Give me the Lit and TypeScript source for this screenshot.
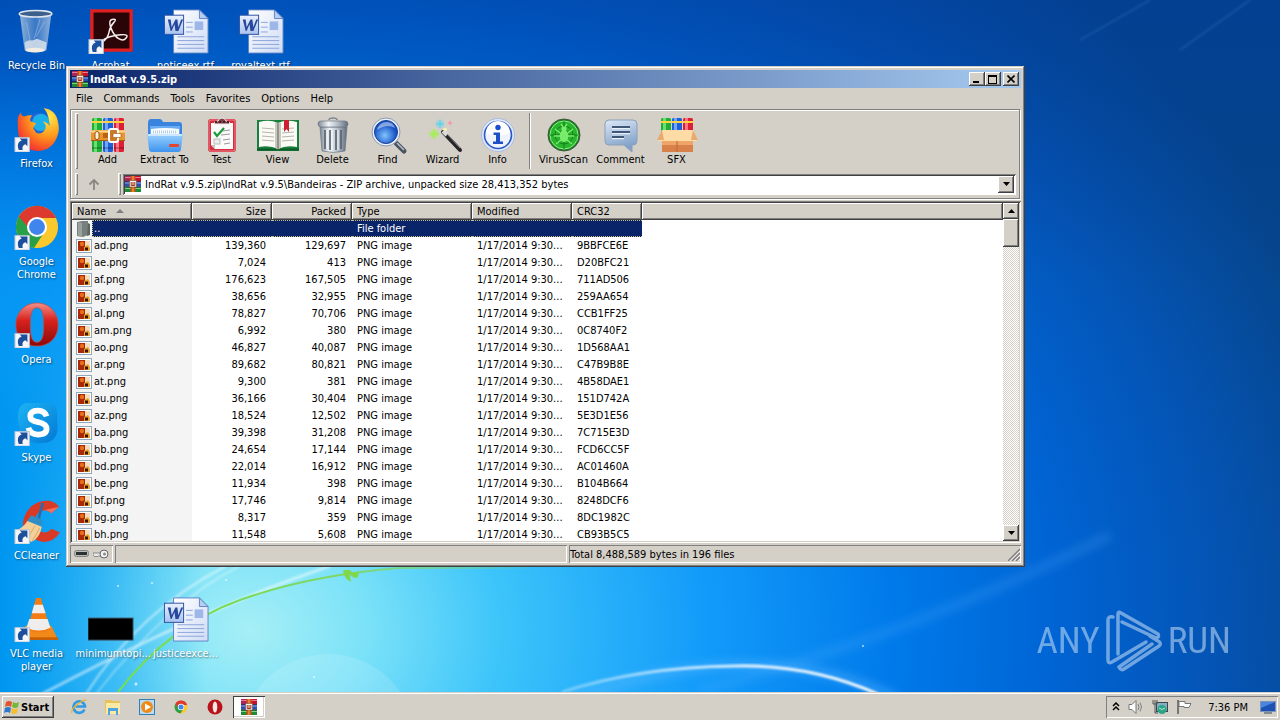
import { LitElement, html, svg, css } from "lit";
import { customElement } from "lit/decorators.js";
import { classMap } from "lit/directives/class-map.js";
import { styleMap } from "lit/directives/style-map.js";

const base = css`
  * { box-sizing: border-box; }
  :host { box-sizing: border-box; font: 11px/13px "DejaVu Sans Condensed", "DejaVu Sans", sans-serif; color: #000; }
  button, select { font: inherit; color: inherit; margin: 0; padding: 0; border: 0; border-radius: 0; background: none; }
  svg { display: block; flex: none; }
  .raised {
    background: #d4d0c8;
    box-shadow: inset -1px -1px #404040, inset 1px 1px #fff, inset -2px -2px #808080;
  }
`;

const rarIcon = html`<svg width="16" height="16" viewBox="0 0 16 16" aria-hidden="true">
  <rect x="0" y="0" width="16" height="5" fill="#b0235a"/><rect x="10" y="0" width="6" height="5" fill="#c8102a"/>
  <rect y="1" width="16" height="1" fill="#e87a9a"/>
  <rect y="5.5" width="16" height="5" fill="#2a50b8"/><rect y="6.5" width="16" height="1" fill="#86a8ee"/>
  <rect y="11" width="16" height="5" fill="#1d8a34"/><rect y="12" width="16" height="1" fill="#7ed086"/>
  <rect y="5" width="16" height=".8" fill="#301030"/><rect y="10.4" width="16" height=".8" fill="#102040"/>
  <rect x="5.5" width="5" height="16" fill="#c8541c"/><rect x="7" width="2" height="16" fill="#e88030"/>
  <rect x="4.500" y="4.500" width="7" height="6.500" fill="#f4f0ec" stroke="#6b3a20" stroke-width=".5"/>
  <path d="M6.200 6v3.500h3.600V6M8 6v3" fill="none" stroke="#a83010" stroke-width="1"/>
</svg>`;

const books = (y: number, h: number) => svg`
  <rect x="2" y="${y}" width="10" height="${h}" rx="1.5" fill="#1fae38"/><rect x="4" y="${y}" width="3" height="${h}" fill="#6ae070"/>
  <rect x="13" y="${y}" width="10" height="${h}" rx="1.5" fill="#1f5fd8"/><rect x="15" y="${y}" width="3" height="${h}" fill="#6ea8fa"/>
  <rect x="24" y="${y}" width="10" height="${h}" rx="1.5" fill="#dc1f34"/><rect x="26" y="${y}" width="3" height="${h}" fill="#ff7482"/>
  <path d="M2 ${y + 4}h10M13 ${y + 4}h10M24 ${y + 4}h10" stroke="#ffd23c" stroke-width="2"/>`;

const tools: Record<string, unknown> = {
  Add: svg`${books(1, 34)}
    <path d="M2 31h10M13 31h10M24 31h10" stroke="#0003" stroke-width="2"/>
    <rect x="1" y="13" width="34" height="11" rx="1" fill="#e8952c"/><path d="M1 14.5h34" stroke="#ffd78a" stroke-width="2"/><path d="M1 23.5h34" stroke="#a85a10"/>
    <rect x="5" y="14.500" width="4" height="8" rx="2" fill="#fff4d8" stroke="#9a5414"/><rect x="13" y="16" width="5" height="5" fill="#b86414"/>
    <rect x="19" y="12" width="9" height="13" rx="2" fill="#c87c2a" stroke="#fff" stroke-width="2"/><rect x="23" y="16.500" width="8" height="4" rx="1" fill="#fff" stroke="#9a5414" stroke-width=".6"/>`,
  "Extract To": svg`<defs><linearGradient id="fo" x2="0" y2="1"><stop stop-color="#9bd0ff"/><stop offset="1" stop-color="#3d94ee"/></linearGradient></defs>
    <path d="M1 6q0-4 3-4h9q2 0 3 3h16q3 0 3 3v10H1z" fill="#3b84de"/><path d="M3 9h30v8H3z" fill="#68adf4"/>
    <path d="M4 12q14-2 28 0v10H4z" fill="#f6fbff"/><path d="M6 15h24" stroke="#b8cde4" stroke-width="3" stroke-dasharray="1 1"/>
    <path d="M0 17h36l-2 15q0 3-3 3H5q-3 0-3-3z" fill="url(#fo)"/><path d="M1 18h34" stroke="#cbe8ff" stroke-width="2"/><rect x="22" y="27" width="10" height="3" rx="1" fill="#e5452c"/>`,
  Test: svg`<rect x="4" y="2" width="28" height="33" rx="3" fill="#d32f3e"/><rect x="5" y="3" width="26" height="31" rx="2" fill="none" stroke="#f08088"/>
    <path d="M7 6h22v26H11l-4-4z" fill="#fbfafa"/><path d="M7 28h4v4" fill="#c9c4c4"/>
    <path d="M10 7q0-3 4-3 1-3 4-3t4 3q4 0 4 3z" fill="#7a4148" stroke="#f3eaea"/><path d="M11 5h14" stroke="#4a1f28" stroke-dasharray="2 2" stroke-width="2"/>
    <path d="M10 15l3 4 7-8" fill="none" stroke="#1d9a3a" stroke-width="2.200"/><path d="M19 14l7-1M17 18l9-1M19 23l7-1M20 27l6-1" stroke="#999"/>
    <rect x="10" y="22" width="6" height="5" fill="#ececec" stroke="#bbb"/>`,
  View: svg`<path d="M-3 3h42v31H-3z" fill="#17803c"/><path d="M-3 32.500h42" stroke="#0c5a26" stroke-width="2"/>
    <path d="M-1 5q11-3 19 1 8-4 19-1v25q-11-2-19 2-8-4-19-2z" fill="#fbfaf4"/><path d="M15 5.500q2 0 3 1.500 1-1.500 3-1.500v25l-3 2-3-2z" fill="#c9c8be"/>
    <path d="M18 6v26" stroke="#565" stroke-width="1"/>
    <path d="M2 11l12 1M2 15l12 1M2 19l12 1M2 23l12 1M22 12l12-1M22 16l12-1M22 20l12-1M22 24l12-1" stroke="#b5b5ac"/><path d="M24 3h5v12l-2.500-3-2.500 3z" fill="#d11f32"/>`,
  Delete: svg`<defs><linearGradient id="tr"><stop stop-color="#7c8796"/><stop offset=".35" stop-color="#f2f5f8"/><stop offset=".7" stop-color="#aab4c0"/><stop offset="1" stop-color="#5f6b7b"/></linearGradient></defs>
    <path d="M14 3q0-2 4-2t4 2" fill="none" stroke="#7d8795" stroke-width="1.500"/>
    <path d="M5 10h27l-2 24q-12 3-23 0z" fill="url(#tr)" stroke="#6a7584" stroke-width=".7"/>
    <path d="M10 13v19M15 13v20M21 13v20M26 13v19" stroke="#5a6675" stroke-width="1.700"/><path d="M12 13v19M17 13v20M23 13v20" stroke="#fff"/>
    <rect x="3" y="4" width="30" height="6" rx="3" fill="url(#tr)" stroke="#6a7584" stroke-width=".7"/>`,
  Find: svg`<defs><radialGradient id="gl" cx=".45" cy=".65"><stop stop-color="#7fc4ff"/><stop offset="1" stop-color="#1550c4"/></radialGradient></defs>
    <path d="M26 26l8 8" stroke="#4a525e" stroke-width="5" stroke-linecap="round"/><path d="M27 26l7 7" stroke="#b7c0cc" stroke-width="1.500"/>
    <circle cx="16" cy="15" r="14" fill="#e9eff6" stroke="#8b9bb0"/><circle cx="16" cy="15" r="11.500" fill="url(#gl)" stroke="#1a3f94"/><path d="M7 13q2-8 10-8 6 0 8 6-8-5-18 2z" fill="#fff7"/>`,
  Wizard: svg`<g fill="#a6ee5a"><circle cx="9" cy="17" r="5" opacity=".35"/><path d="M9 11l1.500 4.500L15 17l-4.500 1.500L9 23l-1.500-4.500L3 17l4.500-1.500z"/></g>
    <g fill="#5cd4ee"><circle cx="15" cy="7" r="4.500" opacity=".35"/><path d="M15 2l1 4 4 1-4 1-1 4-1-4-4-1 4-1z"/></g><path d="M25 3l1 2 2 1-2 1-1 2-1-2-2-1 2-1z" fill="#f49aae"/><circle cx="20" cy="13" r="2" fill="#fff6a8"/>
    <path d="M18 15l17 18" stroke="#26262a" stroke-width="4" stroke-linecap="round"/><path d="M18 14l4 4" stroke="#d9d9de" stroke-width="4"/><path d="M22 17l13 14" stroke="#85858c" stroke-width="1"/>`,
  Info: svg`<circle cx="18" cy="18" r="16.500" fill="#dfe8f8" stroke="#a9bce0"/><circle cx="18" cy="18" r="13.500" fill="#eef3fc" stroke="#2a58c8" stroke-width="1.600"/><path d="M6 16a12 12 0 0 1 24 0q-12 5-24 0z" fill="#fff"/>
    <circle cx="18" cy="10.500" r="2.700" fill="#1c4fc8"/><path d="M13.500 15.500h6.500v9h3V27H13v-2.500h3v-6.500h-2.500z" fill="#1c4fc8"/>`,
  VirusScan: svg`<circle cx="18" cy="18" r="16" fill="#16801e" stroke="#3f5a3a"/><circle cx="18" cy="18" r="14" fill="#28b42c" stroke="#8ff08a" stroke-width="1"/>
    <g stroke="#127518" stroke-width=".8" fill="none"><circle cx="18" cy="18" r="9"/><circle cx="18" cy="18" r="5"/><path d="M4 18h28M18 4v28"/></g>
    <ellipse cx="18" cy="19" rx="4.500" ry="6" fill="#7aec6c"/><circle cx="18" cy="12" r="2.600" fill="#7aec6c"/><path d="M9 12l5 4M27 12l-5 4M8 19h6M28 19h-6M10 27l5-4M26 27l-5-4M15 7l2 3M21 7l-2 3" stroke="#7aec6c" stroke-width="1.400"/>`,
  Comment: svg`<defs><linearGradient id="co" x2=".3" y2="1"><stop stop-color="#dce8f6"/><stop offset="1" stop-color="#7e9fc6"/></linearGradient></defs>
    <path d="M6 3h24q4 0 4 4v17q0 4-4 4h-1v7l-8-7H6q-4 0-4-4V7q0-4 4-4z" fill="url(#co)" stroke="#8aa0bc"/>
    <path d="M9 10.500h18M9 15.500h18M9 20.500h12" stroke="#e8f0fa" stroke-width="3.500"/><path d="M9 10h18M9 15h18M9 20h12" stroke="#3f5878" stroke-width="1.800"/>`,
  SFX: svg`${books(1, 14)}
    <path d="M3 13h31v22H3z" fill="#efa468"/><path d="M3 28h31v7H3z" fill="#d9814a"/><path d="M18 24v11" stroke="#b86a38"/><path d="M3 13h31l4 11H-1z" fill="#ffdca6"/><path d="M3 13l-5 10h7zM34 13l5 10h-7z" fill="#e8aa70"/>`,
};

const toolbar: [string, string][] = [
  ["Add", "wide"], ["Extract To", "wide"], ["Test", "wide"], ["View", ""], ["Delete", ""], ["Find", ""], ["Wizard", ""], ["Info", ""],
  ["VirusScan", "wide split"], ["Comment", "wide"], ["SFX", ""],
];

const files = `ad 139,360 129,697 9BBFCE6E|ae 7,024 413 D20BFC21|af 176,623 167,505 711AD506|ag 38,656 32,955 259AA654|al 78,827 70,706 CCB1FF25|am 6,992 380 0C8740F2|ao 46,827 40,087 1D568AA1|ar 89,682 80,821 C47B9B8E|at 9,300 381 4B58DAE1|au 36,166 30,404 151D742A|az 18,524 12,502 5E3D1E56|ba 39,398 31,208 7C715E3D|bb 24,654 17,144 FCD6CC5F|bd 22,014 16,912 AC01460A|be 11,934 398 B104B664|bf 17,746 9,814 8248DCF6|bg 8,317 359 8DC1982C|bh 11,548 5,608 CB93B5C5`
  .split("|").map((r) => r.split(" "));

const pngIcon = html`<svg width="16" height="16" viewBox="0 0 16 16" aria-hidden="true"><rect x=".5" y="1.500" width="15" height="13" fill="#fff" stroke="#8fa8bc"/>
  <rect x="2" y="3" width="12" height="10" fill="#f7ddc0"/><path d="M2 3h7v6l-1 4H2z" fill="#a82808"/><circle cx="6" cy="6" r="2.200" fill="#e8701c"/><path d="M8 9l4-2 2 3v3H8z" fill="#e8a02c"/><rect x="9" y="9.500" width="3" height="3" fill="#3a1408"/></svg>`;
const folderIcon = html`<svg width="16" height="16" viewBox="0 0 16 16" aria-hidden="true"><path d="M1 1l5-1h6v14l-5 2-6-1z" fill="#77807c"/><path d="M2 1l4 1v14l-4-1z" fill="#9aa19c"/><path d="M12 2l2 1v11l-3 1z" fill="#5d6562"/></svg>`;
const tri = (up: boolean) => html`<svg width="7" height="4" viewBox="0 0 7 4" aria-hidden="true"><path d="${up ? "M0 4h7L3.500 0z" : "M0 0h7L3.500 4z"}"/></svg>`;

@customElement("archive-window")
class ArchiveWindow extends LitElement {
  static styles = [base, css`
    :host {
      display: flex; flex-direction: column; padding: 4px; background: #d4d0c8;
      box-shadow: inset -1px -1px #404040, inset 1px 1px #d4d0c8, inset -2px -2px #808080, inset 2px 2px #fff;
    }
    .title { display: flex; align-items: center; height: 18px; padding: 0 2px; gap: 2px; background: linear-gradient(90deg, #0a246a, #a6caf0); color: #fff; font-weight: bold; }
    .title h1 { flex: 1; margin: 0; font-size: 11px; line-height: 13px; }
    .title button { width: 16px; height: 14px; display: grid; place-items: center; }
    .pair { display: flex; }
    .menu { display: flex; align-items: center; gap: 1px; height: 21px; padding: 1px 0 0 1px; }
    .menu button { padding: 0 5px; line-height: 18px; }
    .rebar { border: 1px solid #808080; box-shadow: inset 1px 1px #fff, 1px 1px #fff; padding: 1px; margin: 0 1px 2px 0; }
    .band { display: flex; align-items: center; }
    .tools { align-items: stretch; height: 60px; padding-left: 3px; }
    .grip { width: 3px; flex: none; box-shadow: inset 1px 1px #fff, inset -1px -1px #808080; margin: 2px 0; }
    .tools .grip { margin-right: 1px; }
    .tool { width: 55px; display: flex; flex-direction: column; align-items: center; padding-top: 6px; line-height: 14px; white-space: nowrap; }
    .tool.wide { width: 57px; }
    .tool svg { width: 36px; height: 36px; overflow: visible; }
    .sep { width: 2px; margin: 2px 4px; border-left: 1px solid #808080; border-right: 1px solid #fff; }
    .address { height: 26px; padding: 0 2px 0 3px; }
    .address .grip { align-self: stretch; }
    .up { width: 32px; display: grid; place-items: center; margin-right: 8px; }
    .combo { flex: 1; display: flex; align-items: center; height: 21px; margin-left: 2px; padding: 2px; background: #fff; box-shadow: inset 1px 1px #808080, inset -1px -1px #fff, inset 2px 2px #404040; }
    .combo select { flex: 1; appearance: none; height: 17px; padding-left: 4px; outline: 0; }
    .drop { width: 16px; height: 17px; display: grid; place-items: center; flex: none; }
    .list { flex: 1; min-height: 0; display: flex; padding: 2px; background: #fff; box-shadow: inset 1px 1px #808080, inset -1px -1px #fff, inset 2px 2px #404040, inset -2px -2px #d4d0c8; }
    .view { flex: 1; overflow: hidden; }
    table { width: 100%; table-layout: fixed; border-collapse: separate; border-spacing: 0; }
    th, td { height: 17px; padding: 0 6px 0 5px; text-align: left; font-weight: normal; line-height: 13px; white-space: nowrap; overflow: hidden; }
    th { background: #d4d0c8; box-shadow: inset -1px -1px #404040, inset 1px 1px #fff, inset -2px -2px #808080; }
    .num { text-align: right; }
    .c1 { width: 120px; } .c2 { width: 80px; } .c3 { width: 100px; } .c4 { width: 70px; }
    .sort { display: inline-block; margin-left: 10px; border: 4px solid transparent; border-top: 0; border-bottom-color: #808080; vertical-align: 2px; }
    td { text-overflow: ellipsis; }
    td.name { padding: 0 0 0 4px; background: #f4f4f4; }
    td.date { padding-right: 0; }
    .file { display: flex; align-items: center; height: 17px; }
    .file span { padding-left: 2px; flex: 1; }
    .on td { background: #0a246a; color: #fff; border: 1px dotted #c9bf8a; border-width: 1px 0; line-height: 12px; }
    .on td.name { background: #f4f4f4; border: 0; }
    .on td.rest { background: none; border: 0; }
    .on .file span { background: #0a246a; border: 1px dotted #c9bf8a; border-right: 0; line-height: 15px; padding-left: 1px; }
    .bar { width: 16px; flex: none; display: flex; flex-direction: column; background: repeating-conic-gradient(#fff 0 25%, #d4d0c8 0 50%) 0 0 / 2px 2px; }
    .bar button { height: 16px; display: grid; place-items: center; }
    .thumb { height: 28px; margin-bottom: auto; }
    .status { display: flex; gap: 2px; margin-top: 2px; height: 18px; }
    .pane { flex: 1; display: flex; align-items: center; padding: 0 1px; box-shadow: inset 1px 1px #808080, inset -1px -1px #fff; }
    .pane.flags { flex: none; width: 43px; gap: 4px; padding: 0 4px; }
    .pane.total { justify-content: space-between; }
  `];

  render() {
    return html`
      <div class="title">${rarIcon}<h1>IndRat v.9.5.zip</h1>
        <div class="pair">
          <button class="raised" aria-label="Minimize"><svg width="10" height="8"><path d="M1 6h6v2H1z"/></svg></button>
          <button class="raised" aria-label="Maximize"><svg width="10" height="9"><path d="M0 0h9v9H0zM1 2v6h7V2z" fill-rule="evenodd"/></svg></button>
        </div>
        <button class="raised" aria-label="Close"><svg width="8" height="8"><path d="M.5.500l7 7M7.500.500l-7 7" stroke="#000" stroke-width="1.600"/></svg></button>
      </div>
      <div class="menu">${["File", "Commands", "Tools", "Favorites", "Options", "Help"].map((m) => html`<button>${m}</button>`)}</div>
      <div class="rebar">
        <div class="band tools"><div class="grip"></div>
          ${toolbar.map(([name, c]) => html`${c.includes("split") ? html`<div class="sep"></div>` : ""}
            <button class=${classMap({ tool: true, wide: c.includes("wide") })}><svg viewBox="0 0 36 36">${tools[name]}</svg>${name}</button>`)}
        </div>
        <div class="band address"><div class="grip"></div>
          <button class="up" aria-label="Up one level"><svg width="12" height="12"><path d="M6 12V2M1.500 6.500L6 2l4.500 4.500" fill="none" stroke="#8a8680" stroke-width="1.800"/></svg></button>
          <div class="grip"></div>
          <div class="combo">${rarIcon}
            <select aria-label="Path"><option>IndRat v.9.5.zip\\IndRat v.9.5\\Bandeiras - ZIP archive, unpacked size 28,413,352 bytes</option></select>
            <span class="drop raised">${tri(false)}</span>
          </div>
        </div>
      </div>
      <div class="list">
        <div class="view"><table>
          <thead><tr><th class="c1">Name<span class="sort"></span></th><th class="c2 num">Size</th><th class="c2 num">Packed</th><th class="c1">Type</th><th class="c3">Modified</th><th class="c4">CRC32</th><th></th></tr></thead>
          <tbody>
            <tr class="on"><td class="name"><div class="file">${folderIcon}<span>..</span></div></td><td></td><td></td><td>File folder</td><td></td><td></td><td class="rest"></td></tr>
            ${files.map(([n, size, packed, crc]) => html`<tr>
              <td class="name"><div class="file">${pngIcon}<span>${n}.png</span></div></td>
              <td class="num">${size}</td><td class="num">${packed}</td><td>PNG image</td><td class="date">1/17/2014 9:30...</td><td>${crc}</td><td></td></tr>`)}
          </tbody>
        </table></div>
        <div class="bar">
          <button class="raised" aria-label="Scroll up">${tri(true)}</button>
          <div class="thumb raised"></div>
          <button class="raised" aria-label="Scroll down">${tri(false)}</button>
        </div>
      </div>
      <div class="status">
        <div class="pane flags">
          <svg width="15" height="8"><rect x=".5" y=".5" width="14" height="6" rx="2" fill="#b8bcb8" stroke="#808480"/><rect x="2" y="2" width="11" height="3" fill="#2c302e"/></svg>
          <svg width="16" height="12" viewBox="0 0 16 12"><path d="M0 5h8v3H5l-1 1-1-1-1 1-2-2z" fill="#e8e8e8" stroke="#777" stroke-width=".8"/><circle cx="11" cy="6" r="4" fill="#f2f2f2" stroke="#666"/><circle cx="11.500" cy="6" r="1.500" fill="#888"/></svg>
        </div>
        <div class="pane"></div>
        <div class="pane total">Total 8,488,589 bytes in 196 files
          <svg width="12" height="14"><path d="M0 14L12 2M4 14l8-8M8 14l4-4" stroke="#808080" stroke-width="1.500"/><path d="M2 14L12 4M6 14l6-6M10 14l2-2" stroke="#fff" stroke-width=".7"/></svg>
        </div>
      </div>`;
  }
}

const arrow = svg`<rect x="1" y="33" width="15" height="15" fill="#f4f6fa" stroke="#b8c4d4"/><path d="M5 46q-3-8 3-10l-2-2h8v8l-2-2q-4 1-3 6z" fill="#1c4f9c"/>`;
const word = svg`<defs><linearGradient id="pg" x2="1" y2="1"><stop stop-color="#fff"/><stop offset="1" stop-color="#cfdcf6"/></linearGradient><linearGradient id="wd" x2="0" y2="1"><stop stop-color="#eaf1fd"/><stop offset="1" stop-color="#a9c2ee"/></linearGradient></defs>
  <path d="M11 2h27l9 9v36H11z" fill="url(#pg)" stroke="#5f84c4"/><path d="M38 2v9h9z" fill="#b8ccf0" stroke="#5f84c4"/>
  <path d="M24 15h7M24 20h7M24 25h7M15 30h28M15 34h28M15 38h28M15 42h28" stroke="#8aa4d8" stroke-width="1"/><rect x="33" y="14" width="9" height="9" fill="#9db8e8"/>
  <rect x="1.500" y="7.500" width="20" height="20" fill="url(#wd)" stroke="#2c4fa4"/><path d="M5 12h3l1 8 4-8h2l1 8 3-8h2l-5 12h-3l-1-7-3 7H8z" fill="#26479c"/>`;

const art: Record<string, unknown> = {
  bin: svg`<defs><linearGradient id="bn"><stop stop-color="#b6cbe0" stop-opacity=".8"/><stop offset=".5" stop-color="#5f90cc" stop-opacity=".6"/><stop offset="1" stop-color="#b4cae4" stop-opacity=".8"/></linearGradient></defs>
    <path d="M6 6l5 38q11 5 23 0l5-38z" fill="url(#bn)"/><ellipse cx="22.500" cy="6" rx="17" ry="3.500" fill="#3d5f8c" stroke="#dfe6ee" stroke-width="1.600"/>
    <path d="M11 36q4-3 8-2l5-2 10 4-1 8q-11 4-21 0z" fill="#d8e2ea" opacity=".85"/><path d="M13 15l4 20M27 12l-6 20M32 14l-9 16" stroke="#a6c4e6" stroke-width="1" opacity=".6"/><ellipse cx="22" cy="44" rx="10" ry="2.500" fill="#f4ece0"/>`,
  acrobat: svg`<path d="M4 3h41v41H4z" fill="#2a0508" stroke="#e02020" stroke-width="3.500"/><path d="M25 12q-4 1-1 9t8 11 8-1-6-3-14 3-7 5 3-1 6-10 5-10-2-3z" fill="none" stroke="#f4eeee" stroke-width="1.500"/>${arrow}`,
  word,
  firefox: svg`<defs><radialGradient id="ff" cx=".75" cy=".2" r="1"><stop stop-color="#ffe94a"/><stop offset=".45" stop-color="#ff9a1c"/><stop offset=".8" stop-color="#f5412c"/><stop offset="1" stop-color="#d81c60"/></radialGradient></defs>
    <circle cx="26" cy="24" r="17" fill="#2263d8"/><circle cx="28" cy="17" r="9" fill="#1cb0e8"/>
    <path d="M4 19q-1-8 3-12 1 4 4 4 4-2 8-1-3 3-2 6l6 2-3 5 3 5q6 2 9-3 3-4-2-9 5 1 7 5Q37 9 31 2q13 2 15 15 2 8-1 15-5 14-20 15Q6 46 4 25z" fill="url(#ff)"/>${arrow}`,
  chrome: svg`<circle cx="24" cy="24" r="22" fill="#fbc92c"/><path d="M4.900 13a22 22 0 0 0 16 32.800L32 29 24 24z" fill="#28a048"/><path d="M4.900 13A22 22 0 0 1 44 14.500H24l-9 10z" fill="#dc3a2e"/><circle cx="24" cy="24" r="10.500" fill="#fff"/><circle cx="24" cy="24" r="8.300" fill="#4084ee"/>${arrow}`,
  opera: svg`<defs><linearGradient id="op" x2="0" y2="1"><stop stop-color="#f49088"/><stop offset=".4" stop-color="#d8221e"/><stop offset="1" stop-color="#8c0808"/></linearGradient></defs>
    <path fill-rule="evenodd" d="M24 1C37 1 46 11 46 24S37 46 24 46 2 37 2 24 11 1 24 1zM24 6C18 6 17 14 17 24S18 42 24 42 31 34 31 24 30 6 24 6z" fill="url(#op)" stroke="#b8504c" stroke-width=".8"/>${arrow}`,
  skype: svg`<defs><linearGradient id="sk" x2="1" y2="1"><stop stop-color="#1cb4f4"/><stop offset="1" stop-color="#0478d4"/></linearGradient></defs>
    <path d="M14 3h21q10 0 10 12v8q2 12-4 18-4 4-14 4-18 0-22-18Q1 4 14 3z" fill="url(#sk)"/><path d="M34 17q-2-6-9-6-8 0-8 6 0 5 8 6 9 2 9 7 0 6-9 6-8 0-10-7" fill="none" stroke="#fff" stroke-width="6"/>${arrow}`,
  ccleaner: svg`<path d="M47 9Q40 0 27 4T10 22t14 22q14 6 24-8l-9-4q-5 6-11 3-7-4-6-12t8-10q5-1 9 3z" fill="#d93a26"/><path d="M47 9l-8 7q-4-4-9-3z" fill="#f0705c"/>
    <path d="M30 5L25 24" stroke="#2a6cac" stroke-width="3"/><path d="M18 18l12 5-2 7-15-5z" fill="#2f8fc4"/><path d="M14 24l15 6q-2 12-11 16L1 34q8-2 13-10z" fill="#f5cf98"/><path d="M22 29L14 42M27 31L19 45" stroke="#d9a864"/>${arrow}`,
  vlc: svg`<path d="M12 31h27l7 15H5z" fill="#f28a1a"/><path d="M5 43h41v3H5z" fill="#c86008"/><path d="M23 2h5l10 33q-12 6-24 0z" fill="#f47c14"/><path d="M21 9h9l3 9H18.500zM16 24h19l3 9q-12 6-25 0z" fill="#f0eeec"/>${arrow}`,
  black: svg`<rect x="0" y="23" width="47" height="23" fill="#000" stroke="#40586c"/>`,
};

const shortcuts: [string, string, number, number][] = [
  ["bin", "Recycle Bin", 1, 1], ["firefox", "Firefox", 2, 1], ["chrome", "Google Chrome", 3, 1], ["opera", "Opera", 4, 1],
  ["skype", "Skype", 5, 1], ["ccleaner", "CCleaner", 6, 1], ["vlc", "VLC media player", 7, 1],
  ["acrobat", "Acrobat", 1, 2], ["black", "minimumtopi...", 7, 2],
  ["word", "noticeex.rtf", 1, 3], ["word", "justiceexce...", 7, 3], ["word", "royaltext.rtf", 1, 4],
];

@customElement("desk-top")
class DeskTop extends LitElement {
  static styles = [base, css`
    :host { display: block; position: relative; overflow: hidden; background: #0a6fdc; }
    .paper { position: absolute; inset: 0; width: 100%; height: 100%; }
    .icons { position: relative; display: grid; grid-template-columns: 73px repeat(3, 75px); grid-template-rows: repeat(7, 98px); padding-top: 8px; }
    .icons a { display: flex; flex-direction: column; align-items: center; gap: 5px; color: #fff; text-decoration: none; text-align: center; text-shadow: 1px 1px 2px #0008; }
    .icons span { max-width: 70px; }
    .long span { white-space: nowrap; }
    archive-window { position: absolute; left: 66px; top: 66px; width: 959px; height: 501px; }
    .mark { position: absolute; right: 49px; bottom: 20px; display: flex; align-items: center; gap: 6px; color: #b9d6f4; opacity: .6; font: 400 37px/62px "Roboto Condensed", Roboto, sans-serif; }
  `];

  render() {
    return html`
      <svg class="paper" viewBox="0 0 1280 692" preserveAspectRatio="none" aria-hidden="true">
        <defs>
          <radialGradient id="sky" gradientUnits="userSpaceOnUse" cx="0" cy="0" r="1150" gradientTransform="translate(250 630) scale(1 .8)">
            <stop stop-color="#a6eff6"/><stop offset=".1" stop-color="#7ce2f8"/><stop offset=".22" stop-color="#3cc4fa"/><stop offset=".4" stop-color="#129afa"/><stop offset=".56" stop-color="#007aea"/><stop offset=".7" stop-color="#0064d4"/><stop offset=".84" stop-color="#0454b4"/><stop offset="1" stop-color="#064488"/>
          </radialGradient>
          <linearGradient id="top" x2="0" y2="1"><stop stop-color="#003c9c" stop-opacity=".5"/><stop offset=".4" stop-color="#003c9c" stop-opacity="0"/></linearGradient>
          <linearGradient id="left"><stop stop-color="#0096f0"/><stop offset=".16" stop-color="#0096f0" stop-opacity="0"/></linearGradient>
          <linearGradient id="leftmask" x2="0" y2="1"><stop offset=".1" stop-color="#000"/><stop offset=".6" stop-color="#fff"/></linearGradient>
          <mask id="lm"><rect width="1280" height="692" fill="url(#leftmask)"/></mask>
          <linearGradient id="leaf"><stop stop-color="#74e04c"/><stop offset=".55" stop-color="#7ed668"/><stop offset="1" stop-color="#7ed668" stop-opacity="0"/></linearGradient>
          <linearGradient id="arc"><stop stop-color="#fff" stop-opacity=".3"/><stop offset=".5" stop-color="#fff" stop-opacity=".8"/><stop offset="1" stop-color="#fff"/></linearGradient>
          <filter id="soft"><feGaussianBlur stdDeviation="1.200"/></filter><filter id="wide"><feGaussianBlur stdDeviation="5"/></filter>
        </defs>
        <rect width="1280" height="692" fill="url(#sky)"/><rect width="1280" height="692" fill="url(#top)"/><rect width="1280" height="692" fill="url(#left)" mask="url(#lm)"/>
        <circle cx="328" cy="742" r="88" fill="#fff" opacity=".13"/>
        <g fill="none" stroke="#fff" filter="url(#soft)">
          <path d="M42 694Q200 610 330 566" stroke-width="3" opacity=".5"/><path d="M86 694Q140 610 226 566" stroke-width="2" opacity=".5"/><path d="M96 694Q170 600 240 566" stroke-width="1.500" opacity=".4"/>
        </g>
        <path d="M118 692Q170 625 240 600T400 568H540" fill="none" stroke="url(#leaf)" stroke-width="2"/><path d="M343 570q1 9 8 12-1-5-1-8 2 4 7 4 2-3 2-5-8 0-9-3z" fill="#7fd84c"/>
        <g filter="url(#wide)" fill="none" stroke="#5cb8ff"><path d="M700 690Q900 640 1110 535" stroke-width="9" opacity=".22"/><path d="M570 700Q760 630 900 700" stroke-width="8" opacity=".5"/></g>
        <path d="M562 692Q640 667 735 666Q810 664 878 694" fill="none" stroke="url(#arc)" stroke-width="3" filter="url(#soft)"/>
        <path d="M1180 50L1250 0M1080 40L1150 0" stroke="#5fa0dc" stroke-width="2" opacity=".2" filter="url(#soft)"/>
        <g fill="#fff" opacity=".7"><circle cx="118" cy="586" r="1"/><circle cx="152" cy="583" r="1"/><circle cx="226" cy="580" r="1"/><circle cx="136" cy="684" r="1.500"/><circle cx="863" cy="646" r="1"/><circle cx="314" cy="677" r="1"/></g>
      </svg>
      <div class="icons">${shortcuts.map(([k, name, row, col]) => html`
        <a href="#" class=${classMap({ long: name.endsWith("...") })} style=${styleMap({ gridArea: `${row} / ${col}` })}><svg width="46" height="46" viewBox="0 0 48 48" aria-hidden="true">${art[k]}</svg><span>${name}</span></a>`)}</div>
      <div class="mark">ANY
        <svg width="56" height="62" viewBox="0 0 56 62" fill="none" stroke="currentColor" stroke-width="3.500" stroke-linejoin="round" stroke-linecap="round">
          <path d="M7 7Q2 6 2 10V50Q2 54 6 52L40 32"/><path d="M12 44V4Q12 1 15 3L52 24Q54 27 50 28L16 12"/><path d="M13 57Q15 61 18 59L53 36Q56 33 52 31L44 26M13 57L46 34"/>
        </svg>RUN</div>
      <archive-window></archive-window>`;
  }
}

const quick: [string, unknown][] = [
  ["Internet Explorer", svg`<path d="M13.500 10.500A5.800 5.800 0 1 1 14 7.500H4.500" fill="none" stroke="#2f9ae6" stroke-width="2.600"/><path d="M1 14Q-1 11 7 5t8-3" fill="none" stroke="#f0b428" stroke-width="1.300"/>`],
  ["Explorer", svg`<path d="M0 1h6l1 1h8v12H0z" fill="#e8c458"/><path d="M1 4h14v11H1z" fill="#fbe9a4"/><path d="M3 9h10v7h-2v-4H5v4H3z" fill="#4ea4e0"/>`],
  ["Media Player", svg`<rect x=".5" y=".5" width="15" height="15" fill="#b8dcf4" stroke="#2f80b8"/><circle cx="8" cy="8" r="6" fill="#f08a14"/><path d="M6 4.500v7l6-3.500z" fill="#fff"/>`],
  ["Chrome", svg`<circle cx="8" cy="8" r="6.500" fill="#fbc92c"/><path d="M2.400 4.700a6.500 6.500 0 0 0 5 9.700L11 9 8 8z" fill="#28a048"/><path d="M2.400 4.700A6.500 6.500 0 0 1 14.200 6H8L5 9z" fill="#dc3a2e"/><circle cx="8" cy="8" r="3.200" fill="#fff"/><circle cx="8" cy="8" r="2.500" fill="#4084ee"/>`],
  ["Opera", svg`<circle cx="8" cy="8" r="7.500" fill="#b8141c"/><ellipse cx="8" cy="8" rx="2.300" ry="5.500" fill="#f6e8e4"/>`],
];

@customElement("task-bar")
class TaskBar extends LitElement {
  static styles = [base, css`
    :host { display: flex; align-items: center; height: 28px; padding: 2px 2px 0; background: #d4d0c8; box-shadow: inset 0 1px #d4d0c8, inset 0 2px #fff; }
    .start { display: flex; align-items: center; gap: 1px; width: 52px; height: 22px; padding-left: 2px; font-weight: bold; }
    .quick { display: flex; gap: 2px; margin-left: 9px; }
    .quick button { width: 32px; height: 22px; display: grid; place-items: center; }
    .quick .open { background: #fff; box-shadow: inset 1px 1px #404040, inset -1px -1px #fff, inset -2px -2px #d4d0c8; }
    .tray { margin-left: auto; display: flex; align-items: center; gap: 8px; height: 22px; padding: 0 2px 0 6px; box-shadow: inset 1px 1px #808080, inset -1px -1px #fff; }
    .time { margin: 0 4px 0 8px; }
  `];

  render() {
    return html`
      <button class="start raised"><svg width="16" height="16" viewBox="0 0 16 16" aria-hidden="true"><path d="M2 3q3-2 6 0L7 8Q4 6 1 8z" fill="#e2542c"/><path d="M9 3q3 2 6 0l-1 5q-3 2-6 0z" fill="#74b838"/><path d="M1 9q3-2 6 0l-1 5q-3-2-6 0z" fill="#2f78d0"/><path d="M8 9q3 2 6 0l-1 5q-3 2-6 0z" fill="#f4be2c"/></svg>Start</button>
      <div class="quick">
        ${quick.map(([n, i]) => html`<button aria-label=${n}><svg width="16" height="16" viewBox="0 0 16 16">${i}</svg></button>`)}
        <button class="open" aria-label="IndRat v.9.5.zip">${rarIcon}</button>
      </div>
      <div class="tray">
        <svg width="8" height="10"><path d="M1 4l3-3 3 3M1 8l3-3 3 3" fill="none" stroke="#000" stroke-width="1.500"/></svg>
        <svg width="16" height="16"><path d="M1 5.500h3l4-4v13l-4-4H1z" fill="#fff" stroke="#777"/><path d="M10 5q2 3 0 6M12 3.500q3 4.500 0 9" fill="none" stroke="#808080"/></svg>
        <svg width="16" height="16"><rect x="4.500" y="3.500" width="11" height="9" fill="#7fb0c8" stroke="#444"/><path d="M1 1v4h2v9h3M3 1v4h2V1" fill="none" stroke="#555"/><circle cx="10" cy="10.500" r="4.500" fill="#2ca488"/><path d="M7 9q3 3 6 0" fill="none" stroke="#b0ecd0"/></svg>
        <svg width="16" height="16"><path d="M2 1v14" stroke="#777" stroke-width="2"/><path d="M3 2.500h6v2h6l-2 4H8v-1H3z" fill="#fff" stroke="#777"/></svg>
        <span class="time">7:36 PM</span>
        <svg width="16" height="14"><rect x=".5" y="1.500" width="15" height="10" fill="#1c52b4" stroke="#7d93b8"/><path d="M1 2h14L1 8z" fill="#4a86e0"/><path d="M4 13h8" stroke="#345"/></svg>
      </div>`;
  }
}

@customElement("app-root")
class AppRoot extends LitElement {
  static styles = css`
    :host { display: grid; grid-template-rows: minmax(0, 1fr) auto; height: 100vh; overflow: hidden; }
  `;
  render() {
    return html`<desk-top></desk-top><task-bar></task-bar>`;
  }
}
